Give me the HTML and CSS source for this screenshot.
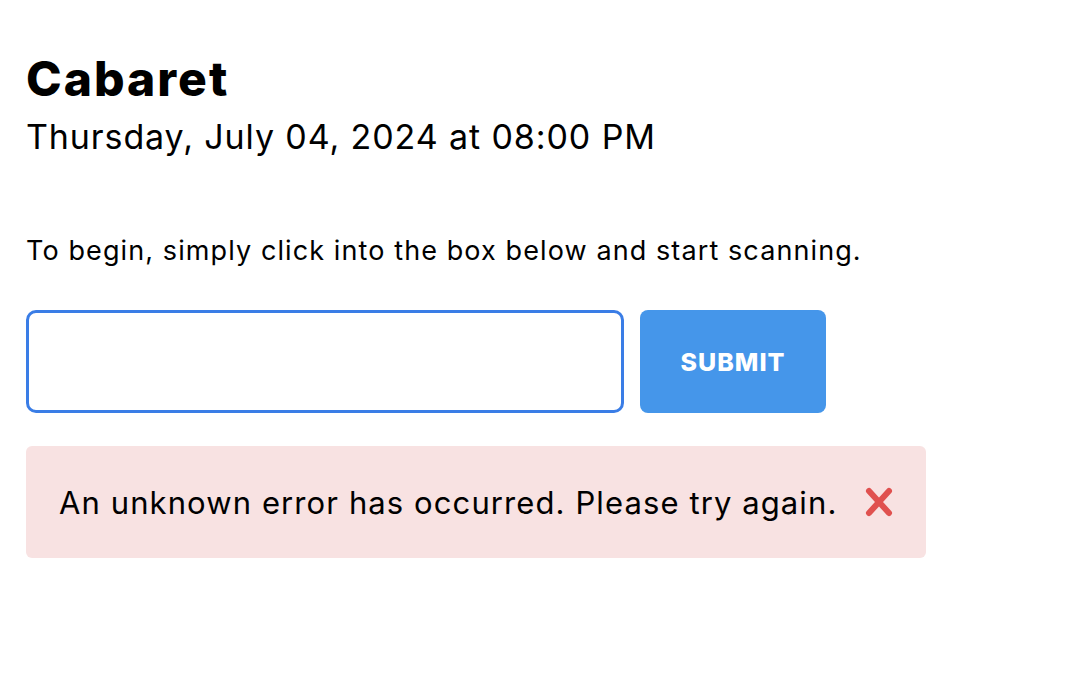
FILE: index.html
```html
<!DOCTYPE html>
<html lang="en">
<head>
    <meta charset="UTF-8">
    <meta name="viewport" content="width=device-width, initial-scale=1.0">
    <title>Scan Tickets - Cabaret</title>
    <link rel="stylesheet" href="styles.css">
</head>
<body>
    <main class="scanner">
        <h1 class="event-title">Cabaret</h1>
        <p class="event-date">Thursday, July 04, 2024 at 08:00 PM</p>

        <p class="intro">To begin, simply click into the box below and start scanning.</p>

        <form class="scan-form" onsubmit="return false;">
            <input type="text" class="scan-input" id="barcodeInput" autocomplete="off">
            <button type="submit" class="submit-button">Submit</button>
        </form>

        <div class="alert alert-error">
            <span class="alert-text">An unknown error has occurred. Please try again.</span>
            <button class="alert-close" aria-label="Close">
                <svg width="30" height="32" viewBox="0 0 30 32">
                    <path d="M5 5 L25 27 M25 5 L5 27" stroke="#e0514f" stroke-width="6" stroke-linecap="round" fill="none"/>
                </svg>
            </button>
        </div>
    </main>
</body>
</html>
```

FILE: styles.css
```css
body {
    margin: 0;
    font-family: Inter, "Open Sans", sans-serif;
    color: #000;
    background: #fff;
}
.scanner {
    padding: 53px 26px 40px;
}
.event-title {
    font-size: 48px;
    font-weight: 800;
    line-height: 52px;
    letter-spacing: 2px;
    margin: 0;
}
.event-date {
    font-size: 34px;
    line-height: 40px;
    letter-spacing: 0.9px;
    margin: 12px 0 0;
}
.intro {
    font-size: 27px;
    line-height: 32px;
    letter-spacing: 1.1px;
    margin: 78px 0 0;
}
.scan-form {
    display: flex;
    gap: 16px;
    margin-top: 43px;
}
.scan-input {
    box-sizing: border-box;
    width: 598px;
    height: 103px;
    border: 3px solid #3a7de6;
    border-radius: 10px;
    outline: none;
    font-size: 24px;
    padding: 0 16px;
}
.submit-button {
    width: 186px;
    height: 103px;
    border: none;
    border-radius: 8px;
    background-color: #4596ea;
    color: #fff;
    font-family: inherit;
    font-size: 25px;
    font-weight: 800;
    letter-spacing: 1px;
    text-transform: uppercase;
    cursor: pointer;
}
.alert {
    display: flex;
    align-items: center;
    box-sizing: border-box;
    width: 900px;
    height: 112px;
    margin-top: 33px;
    padding: 0 20px 0 33px;
    border-radius: 6px;
}
.alert-error {
    background-color: #f8e2e2;
}
.alert-text {
    font-size: 31px;
    letter-spacing: 1.1px;
    white-space: nowrap;
}
.alert-close {
    display: flex;
    flex-shrink: 0;
    margin-left: 27px;
    padding: 0;
    border: none;
    background: none;
    cursor: pointer;
}
```
